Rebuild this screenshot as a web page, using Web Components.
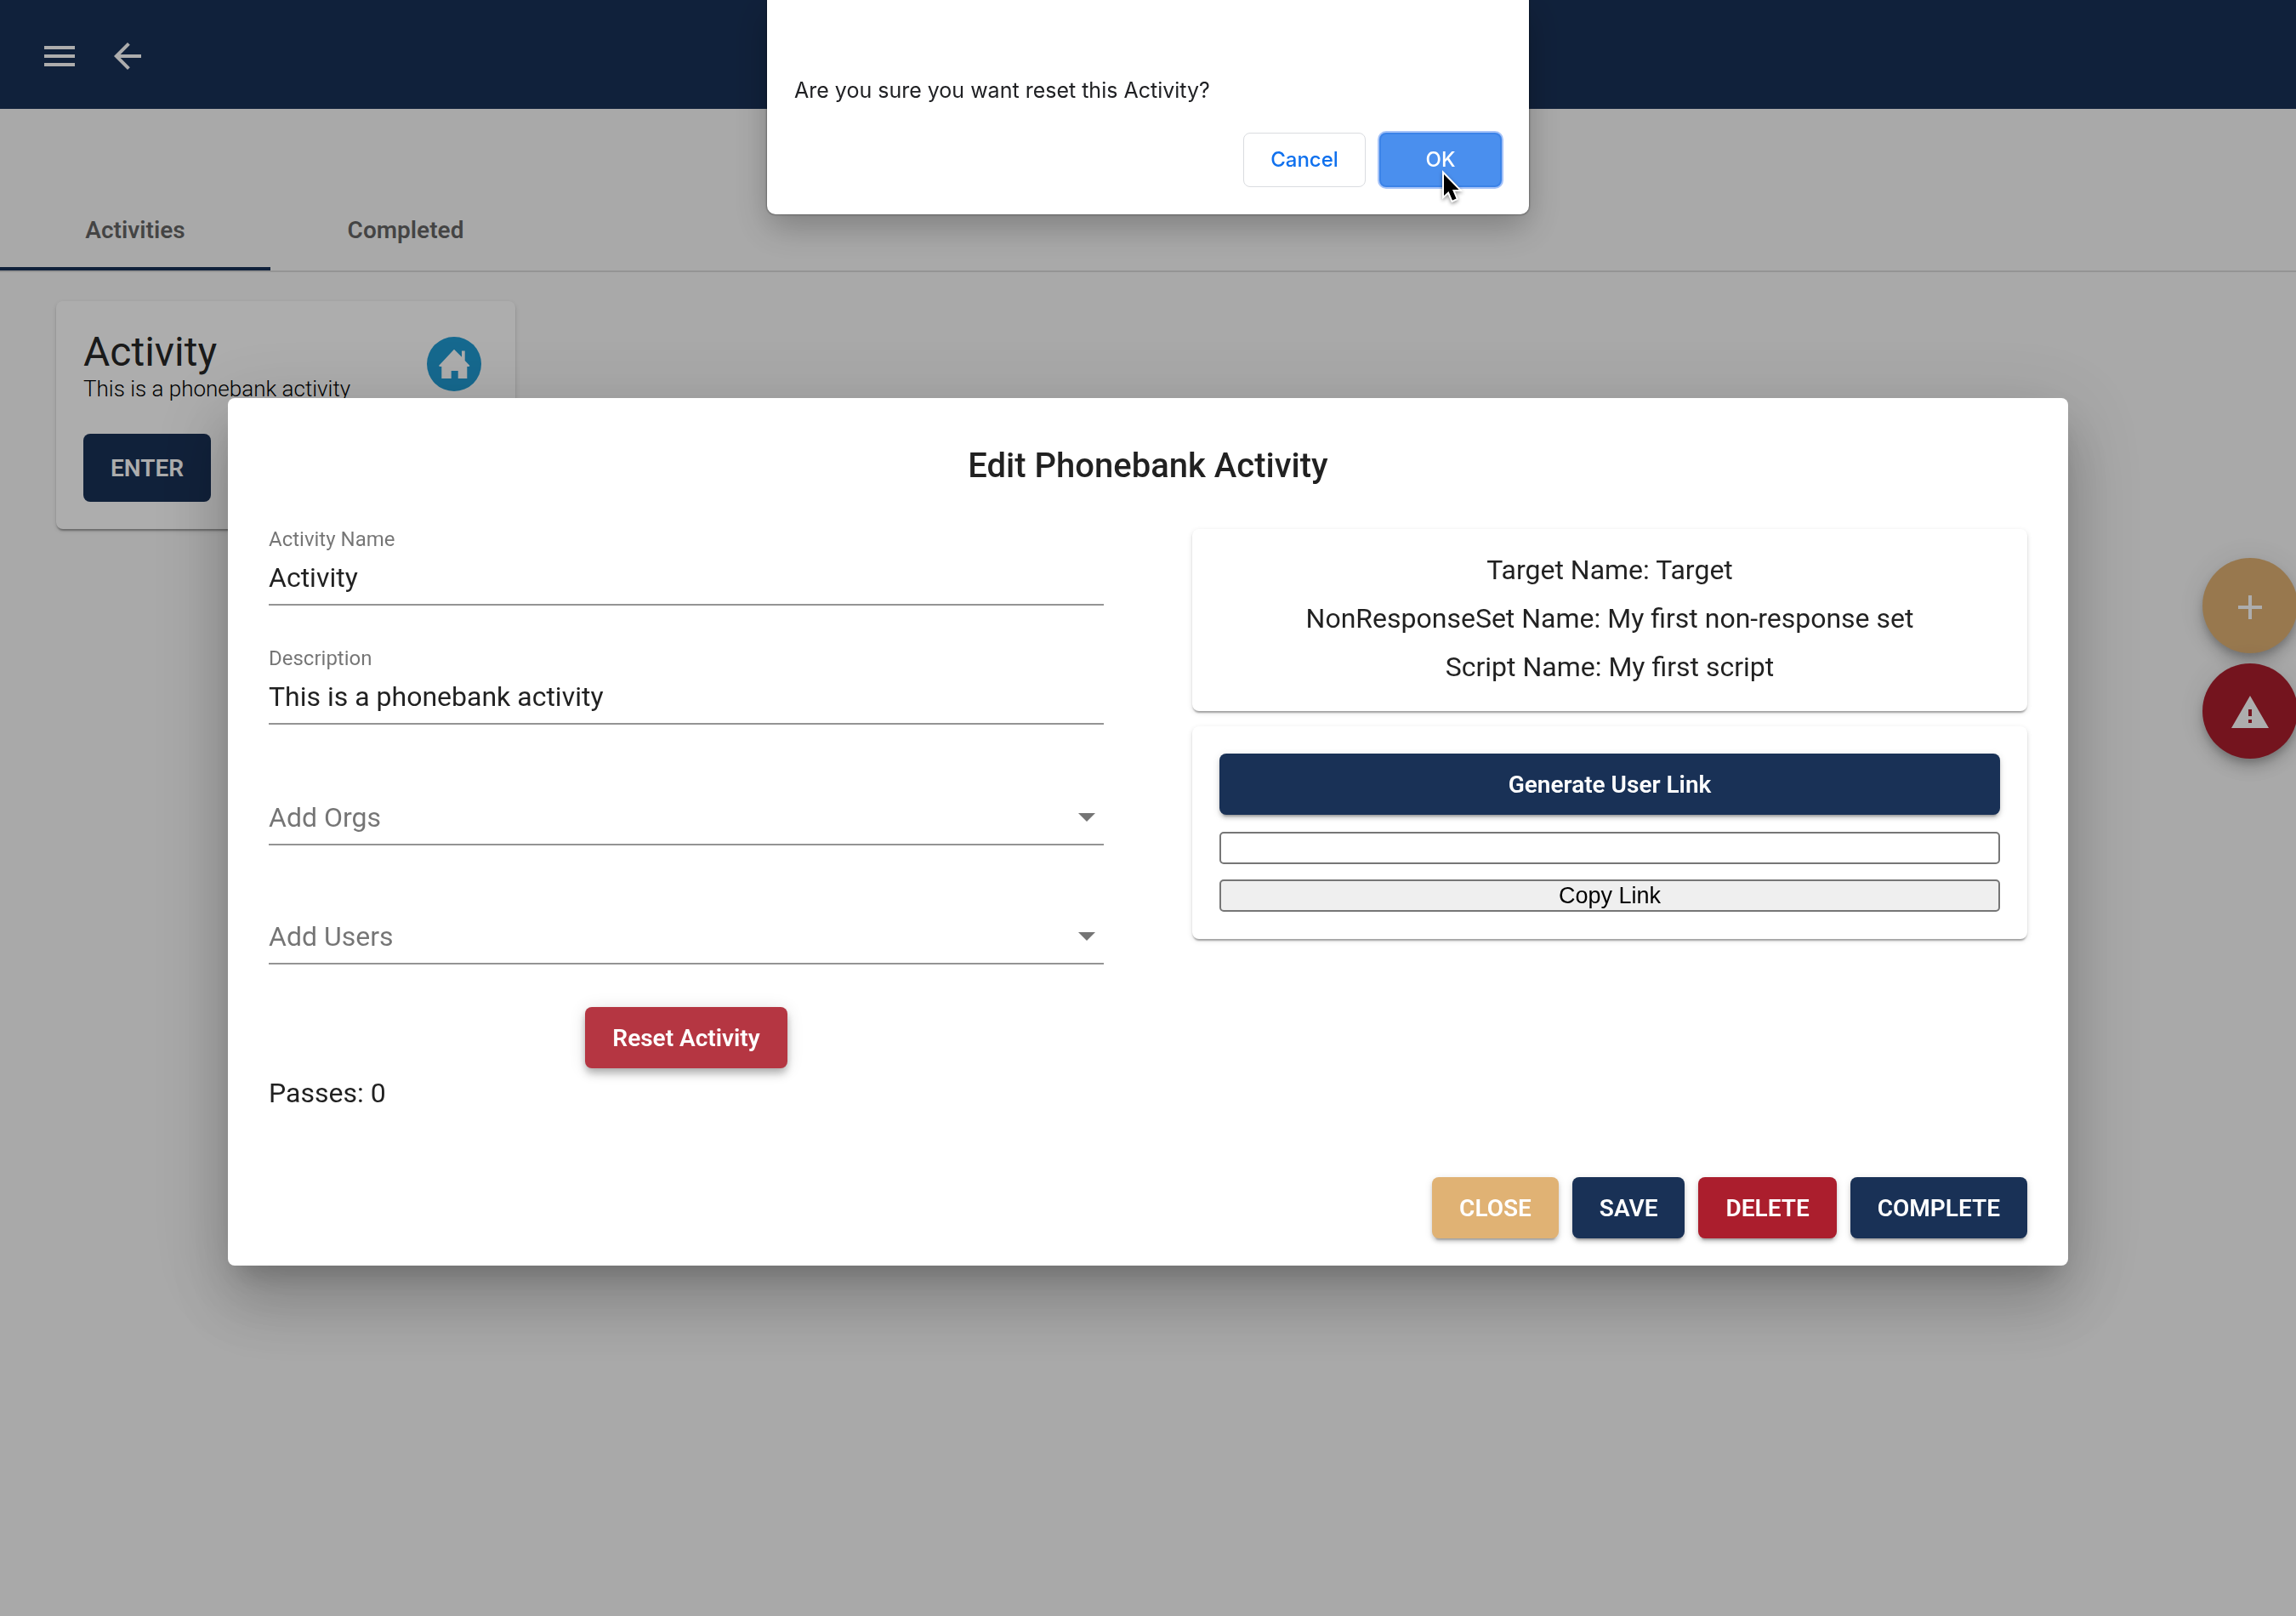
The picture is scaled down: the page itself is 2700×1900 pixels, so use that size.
<!DOCTYPE html>
<html lang="en">
<head>
<meta charset="utf-8">
<title>Phonebank Activities</title>
<style>
  html, body { margin: 0; }
  body {
    font-family: Roboto, "Liberation Sans", sans-serif;
    color: rgba(0, 0, 0, .87);
    background: #fafafa;
    overflow: hidden;
  }
</style>
</head>
<body>
<pb-app></pb-app>

<script>
const define = (name, html, setup) => {
  const tpl = document.createElement('template');
  tpl.innerHTML = html;
  customElements.define(name, class extends HTMLElement {
    connectedCallback() {
      if (this.shadowRoot) return;
      const root = this.attachShadow({ mode: 'open' });
      root.append(tpl.content.cloneNode(true));
      if (setup) setup(this, root);
    }
  });
};

/* Raised button; tone picks its colour */
define('pb-button', `
  <style>
    :host { display: block; }
    button {
      box-sizing: border-box; width: 100%; height: 72px; padding: 2px 32px 0; border: 0; border-radius: 8px;
      background: #193156; color: #fff; font: 600 28px/36px Roboto, sans-serif; white-space: nowrap;
      box-shadow: 0 6px 2px -4px rgba(0,0,0,.2), 0 4px 4px rgba(0,0,0,.14), 0 2px 10px rgba(0,0,0,.12);
    }
    :host([tone=gold]) button { background: #e0b274; }
    :host([tone=red]) button { background: #ab1e2d; }
    :host([tone=hover]) button {
      background: #b53642;
      box-shadow: 0 4px 8px -2px rgba(0,0,0,.2), 0 8px 10px rgba(0,0,0,.14), 0 2px 20px rgba(0,0,0,.12);
    }
    :host([tone=flat]) button { height: 80px; box-shadow: none; }
  </style>
  <button type="button"><slot></slot></button>`);

define('pb-header', `
  <style>
    :host { display: block; background: #193157; }
    nav { display: flex; gap: 32px; height: 128px; padding: 42px 46px; box-sizing: border-box; }
    button { padding: 0; border: 0; background: none; width: 48px; height: 48px; }
    svg { display: block; width: 48px; height: 48px; fill: #fff; }
  </style>
  <nav>
    <button type="button" aria-label="Menu"><svg viewBox="0 0 24 24"><path d="M3 18h18v-2H3v2zm0-5h18v-2H3v2zm0-7v2h18V6H3z"/></svg></button>
    <button type="button" aria-label="Back"><svg viewBox="0 0 24 24"><path d="M20 11H7.83l5.59-5.59L12 4l-8 8 8 8 1.41-1.41L7.83 13H20v-2z"/></svg></button>
  </nav>`);

define('pb-tabs', `
  <style>
    :host { display: block; padding-top: 94px; }
    div { display: flex; border-bottom: 2px solid rgba(0,0,0,.12); }
    button {
      width: 318px; height: 96px; padding: 6px 0 0; border: 0; border-bottom: 4px solid transparent;
      background: none; color: rgba(0,0,0,.6); font: 600 28px/36px Roboto, sans-serif;
    }
    button[aria-selected=true] { border-color: #193157; }
  </style>
  <div role="tablist">
    <button type="button" role="tab" aria-selected="true">Activities</button>
    <button type="button" role="tab" aria-selected="false">Completed</button>
  </div>`);

define('pb-activity-card', `
  <style>
    :host {
      display: block; box-sizing: border-box; width: 540px; padding: 32px; border-radius: 8px; background: #fff;
      box-shadow: 0 4px 2px -2px rgba(0,0,0,.2), 0 2px 2px rgba(0,0,0,.14), 0 2px 6px rgba(0,0,0,.12);
    }
    header { display: flex; justify-content: space-between; margin-bottom: 38px; }
    h2 { margin: 0; font-weight: 400; font-size: 48px; line-height: 56px; }
    p { margin: 0; font-weight: 300; font-size: 26px; line-height: 30px; color: #000; }
    svg { width: 64px; height: 64px; margin: 10px 8px 0 0; }
    pb-button { width: 150px; }
  </style>
  <header>
    <div>
      <h2><slot name="title"></slot></h2>
      <p><slot></slot></p>
    </div>
    <svg viewBox="0 0 64 64" aria-hidden="true">
      <circle cx="32" cy="32" r="32" fill="#209bd3"/>
      <path fill="#fff" d="M32 14.7 41 23.8V16.5h3.7V28l5.8 6-1 1h-2.2v14H36.7v-9h-8v9H17.3V35h-2.2l-1.1-1z"/>
    </svg>
  </header>
  <pb-button tone="flat">ENTER</pb-button>`);

define('pb-fab', `
  <style>
    :host { display: block; }
    button {
      display: block; box-sizing: border-box; width: 112px; height: 112px; padding: 34px 32px 30px; border: 0; border-radius: 50%;
      background: #e0b274;
      box-shadow: 0 6px 10px -2px rgba(0,0,0,.2), 0 12px 20px rgba(0,0,0,.14), 0 2px 36px rgba(0,0,0,.12);
    }
    :host([tone=red]) button { background: #ab1e2d; }
    ::slotted(svg) { display: block; width: 48px; height: 48px; fill: #fff; }
  </style>
  <button type="button"><slot></slot></button>`,
  (host, root) => root.querySelector('button').setAttribute('aria-label', host.getAttribute('label')));

define('pb-field', `
  <style>
    :host { display: block; }
    label { display: block; margin-bottom: 2px; font-size: 24px; line-height: 24px; color: rgba(0,0,0,.54); }
    input {
      display: block; box-sizing: border-box; width: 100%; height: 64px; padding: 0; border: 0; border-bottom: 2px solid #949494;
      background: none; color: rgba(0,0,0,.87); font: 400 32px/40px Roboto, sans-serif; outline: 0;
    }
  </style>
  <label for="f"></label><input id="f" type="text">`,
  (host, root) => {
    root.querySelector('label').textContent = host.getAttribute('label');
    root.querySelector('input').value = host.getAttribute('value');
  });

define('pb-select', `
  <style>
    :host { display: grid; align-items: center; border-bottom: 2px solid #949494; }
    select, svg { grid-area: 1 / 1; }
    select {
      appearance: none; width: 100%; height: 62px; padding: 0; border: 0; background: none;
      color: rgba(0,0,0,.54); font: 400 32px/40px Roboto, sans-serif; outline: 0;
    }
    svg { justify-self: end; width: 20px; height: 10px; margin-right: 10px; fill: #757575; pointer-events: none; }
  </style>
  <select><option></option></select>
  <svg viewBox="0 0 20 10" aria-hidden="true"><path d="M0 0h20L10 10z"/></svg>`,
  (host, root) => {
    root.querySelector('option').textContent = host.getAttribute('label');
    root.querySelector('select').setAttribute('aria-label', host.getAttribute('label'));
  });

define('pb-panel', `
  <style>
    :host {
      display: flex; flex-direction: column; padding: 32px; border-radius: 8px; background: #fff;
      box-shadow: 0 4px 2px -2px rgba(0,0,0,.2), 0 2px 2px rgba(0,0,0,.14), 0 2px 6px rgba(0,0,0,.12);
    }
  </style>
  <slot></slot>`);

define('pb-edit-dialog', `
  <style>
    :host {
      display: block; box-sizing: border-box; width: 90%; max-width: 2164px; padding: 48px 48px 32px; border-radius: 8px; background: #fff;
      box-shadow: 0 22px 30px -14px rgba(0,0,0,.2), 0 48px 76px 6px rgba(0,0,0,.14), 0 18px 92px 16px rgba(0,0,0,.12);
    }
    h1 { margin: 0 0 42px; font-weight: 500; font-size: 40px; line-height: 64px; text-align: center; }
    .columns { display: grid; grid-template-columns: 1fr 1fr; gap: 104px; }
    .columns > * { min-width: 0; }
    .inputs { display: grid; gap: 50px; }
    .selects { display: grid; gap: 76px; margin: 78px 0 50px; }
    .reset { display: flex; justify-content: center; }
    .passes { margin: 0; font-size: 32px; line-height: 58px; }
    .info { gap: 21px; margin-bottom: 18px; padding: 30px 32px 34px; }
    .info p { margin: 0; font-size: 32px; line-height: 36px; text-align: center; }
    .link input, .link button {
      box-sizing: border-box; width: 100%; height: 38px; padding: 0 4px; border: 2px solid #767676; border-radius: 5px;
      font: 400 27px/32px "Liberation Sans", sans-serif; color: #000; background: #fff;
    }
    .link input { margin: 20px 0 18px; }
    .link button { background: #efefef; }
    footer { display: flex; justify-content: flex-end; gap: 16px; margin-top: 70px; }
  </style>
  <h1>Edit Phonebank Activity</h1>
  <div class="columns">
    <form>
      <div class="inputs">
        <pb-field label="Activity Name" value="Activity"></pb-field>
        <pb-field label="Description" value="This is a phonebank activity"></pb-field>
      </div>
      <div class="selects">
        <pb-select label="Add Orgs"></pb-select>
        <pb-select label="Add Users"></pb-select>
      </div>
      <div class="reset"><pb-button tone="hover">Reset Activity</pb-button></div>
      <p class="passes">Passes: 0</p>
    </form>
    <div>
      <pb-panel class="info">
        <p>Target Name: Target</p>
        <p>NonResponseSet Name: My first non-response set</p>
        <p>Script Name: My first script</p>
      </pb-panel>
      <pb-panel class="link">
        <pb-button>Generate User Link</pb-button>
        <input type="text" aria-label="User link" readonly>
        <button type="button">Copy Link</button>
      </pb-panel>
    </div>
  </div>
  <footer>
    <pb-button tone="gold">CLOSE</pb-button>
    <pb-button>SAVE</pb-button>
    <pb-button tone="red">DELETE</pb-button>
    <pb-button>COMPLETE</pb-button>
  </footer>`);

define('pb-confirm', `
  <style>
    :host {
      display: block; box-sizing: border-box; width: 896px; padding: 88px 32px 32px; border-radius: 0 0 10px 10px; background: #fff;
      font-family: Inter, sans-serif;
      box-shadow: 0 0 2px 1px rgba(0,0,0,.3), 0 16px 40px rgba(0,0,0,.25);
    }
    p { margin: 0 0 32px; font-size: 25px; line-height: 36px; color: #202124; }
    div { display: flex; justify-content: flex-end; gap: 16px; }
    button {
      box-sizing: border-box; width: 144px; height: 64px; padding: 0; border: 1px solid #dadce0; border-radius: 8px;
      background: #fff; color: #1071ee; font: 500 24px/32px Inter, sans-serif;
    }
    .ok { background: #4a8fee; border: 2px solid #3b83e8; color: #fff; box-shadow: 0 0 0 2px #a6c3f8; }
  </style>
  <p>Are you sure you want reset this Activity?</p>
  <div>
    <button type="button">Cancel</button>
    <button type="button" class="ok">OK</button>
  </div>`);

define('pb-app', `
  <style>
    :host { display: block; min-height: 100vh; }
    main { padding: 34px 66px; }
    .fabs { position: fixed; top: 656px; right: -2px; display: grid; gap: 12px; }
    .backdrop {
      position: fixed; inset: 0; display: flex; align-items: center; justify-content: center;
      padding-top: 56px; background: rgba(0,0,0,.32);
    }
    .top { position: fixed; inset: 0 0 auto; display: flex; justify-content: center; }
    .pointer { position: fixed; left: 1692px; top: 198px; width: 32px; height: 44px; filter: drop-shadow(0 2px 2px rgba(0,0,0,.4)); }
  </style>
  <pb-header></pb-header>
  <pb-tabs></pb-tabs>
  <main>
    <pb-activity-card><span slot="title">Activity</span>This is a phonebank activity</pb-activity-card>
  </main>
  <div class="fabs">
    <pb-fab label="Add activity"><svg viewBox="0 0 24 24"><path d="M19 13h-6v6h-2v-6H5v-2h6V5h2v6h6v2z"/></svg></pb-fab>
    <pb-fab label="Report problem" tone="red"><svg viewBox="0 0 24 24"><path d="M1 21h22L12 2 1 21zm12-3h-2v-2h2v2zm0-4h-2v-4h2v4z"/></svg></pb-fab>
  </div>
  <div class="backdrop"><pb-edit-dialog></pb-edit-dialog></div>
  <div class="top"><pb-confirm></pb-confirm></div>
  <svg class="pointer" viewBox="0 0 32 44" aria-hidden="true">
    <path d="M6 7v25l5.5-5 4.5 10.500 4.500-2-4.500-10.500H23.500z" fill="#000" stroke="#fff" stroke-width="4" paint-order="stroke"/>
  </svg>`);
</script>
</body>
</html>
